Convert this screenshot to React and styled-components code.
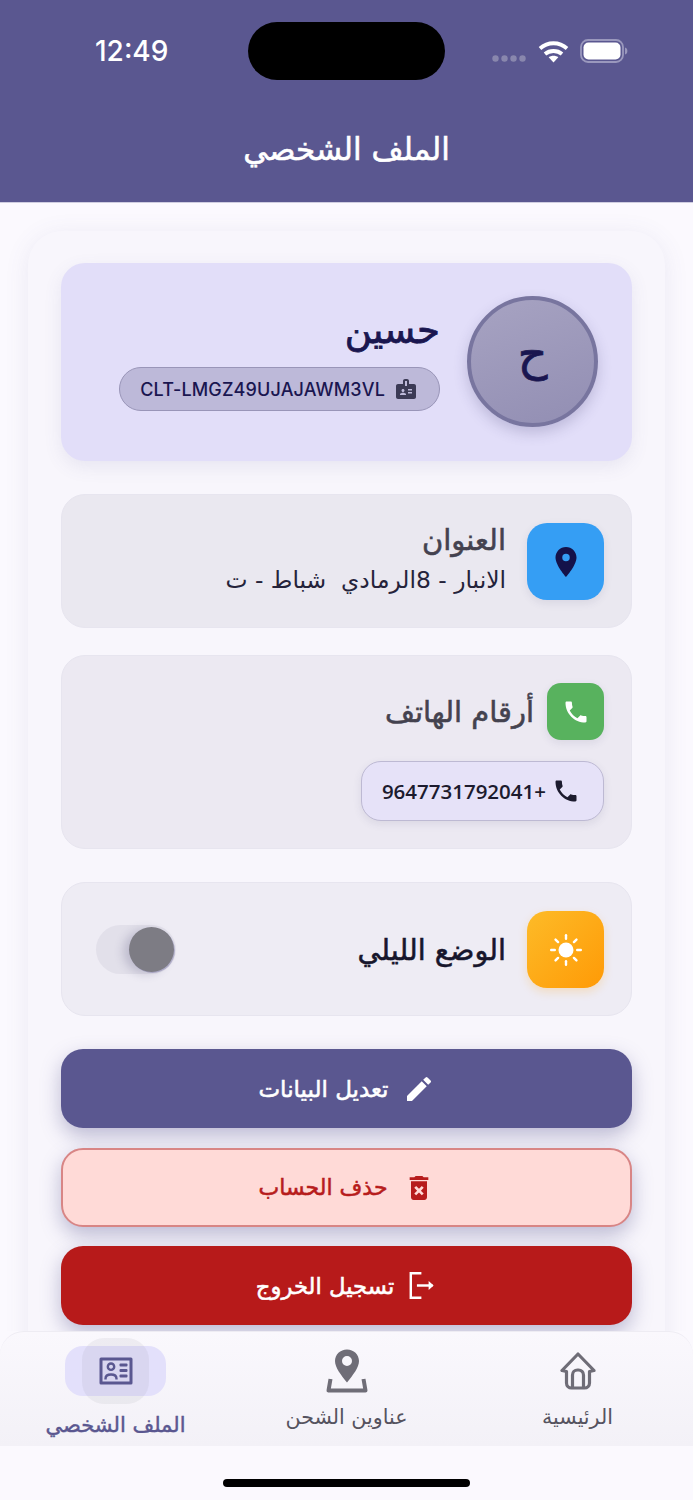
import React from 'react';
import styled, { createGlobalStyle, css } from 'styled-components';
import { MdBadge, MdDeleteForever, MdEdit, MdLocationOn, MdPhone } from 'react-icons/md';

const GlobalStyle = createGlobalStyle`
  html, body {
    margin: 0;
    padding: 0;
    background: #fbf9fe;
  }
  * {
    box-sizing: border-box;
  }
`;

// the arabic in the screenshot is a medium weight, regular + thin stroke comes closest
const mediumArabic = css`
  font-weight: 400;
  -webkit-text-stroke: 0.55px currentColor;
`;

const Page = styled.div`
  width: 693px;
  height: 1500px;
  display: flex;
  flex-direction: column;
  overflow: hidden;
  background: #fbf9fe;
  font-family: "DejaVu Sans", "Noto Sans", sans-serif;
`;

const Header = styled.header`
  height: 203px;
  flex: none;
  background: #5a5790;
  border-bottom: 1px solid #cfcde0;
  color: #fff;
  display: flex;
  flex-direction: column;
  align-items: center;
`;

const StatusBar = styled.div`
  width: 100%;
  height: 58px;
  margin-top: 22px;
  display: grid;
  grid-template-columns: 248px 197px 248px;
`;

const Time = styled.div`
  font-family: Inter, sans-serif;
  font-size: 28px;
  font-weight: 500;
  line-height: 58px;
  padding-left: 95px;
`;

const Island = styled.div`
  background: #000;
  border-radius: 29px;
`;

const StatusIcons = styled.div`
  display: flex;
  align-items: center;
  gap: 11px;
  padding: 0 0 0 47px;
`;

const Title = styled.h1`
  margin: 49px 0 0;
  font-size: 31px;
  line-height: 40px;
  ${mediumArabic}
`;

const Scroll = styled.main`
  flex: 1;
  min-height: 0;
  overflow: hidden;
  padding: 28px 28px 0;
`;

const Card = styled.section`
  height: 1200px;
  padding: 32px 33px;
  border-radius: 34px;
  background: #f8f6fc;
  box-shadow: 0 4px 24px rgba(90, 87, 144, 0.1);
  display: flex;
  flex-direction: column;
`;

const ProfileCard = styled.div`
  height: 198px;
  flex: none;
  padding: 33px 34px 0 0;
  border-radius: 24px;
  background: #e2def9;
  box-shadow: 0 6px 18px rgba(90, 87, 144, 0.1);
  display: flex;
  justify-content: flex-start;
  flex-direction: row-reverse;
  gap: 27px;
`;

const Avatar = styled.div`
  width: 131px;
  height: 131px;
  flex: none;
  border-radius: 50%;
  border: 4px solid #78759f;
  background: linear-gradient(160deg, #a7a3c2, #928eb3);
  box-shadow: 0 6px 14px rgba(60, 56, 110, 0.22);
  color: #1a1650;
  display: flex;
  align-items: center;
  justify-content: center;
  padding-bottom: 16px;
  font-size: 46px;
  -webkit-text-stroke: 0.8px currentColor;
`;

const ProfileInfo = styled.div`
  display: flex;
  flex-direction: column;
  align-items: flex-end;
  padding-top: 12px;
`;

const Name = styled.div`
  color: #1a1650;
  font-size: 37px;
  line-height: 46px;
  font-weight: 400;
  -webkit-text-stroke: 0.8px currentColor;
  direction: rtl;
`;

const CodePill = styled.div`
  height: 44px;
  margin-top: 13px;
  padding: 0 21px 0 20px;
  border-radius: 22px;
  border: 1px solid #9995b8;
  background: #bdb9d9;
  color: #1a1650;
  display: flex;
  align-items: center;
  gap: 9px;
  font-family: Inter, sans-serif;
  font-size: 18px;
  font-weight: 500;
  letter-spacing: 0.15px;
  svg {
    color: #3b3a55;
  }
`;

const Section = styled.div`
  height: ${(p) => p.$height}px;
  flex: none;
  margin-top: ${(p) => p.$gap}px;
  padding: ${(p) => p.$top || 28}px 27px 0 28px;
  border-radius: 24px;
  border: 1px solid #e7e5ef;
  background: ${(p) => p.$bg};
  direction: rtl;
`;

const Row = styled.div`
  display: flex;
  align-items: ${(p) => (p.$center ? 'center' : 'flex-start')};
  gap: ${(p) => p.$gap || 21}px;
`;

const IconTile = styled.div`
  width: ${(p) => p.$w}px;
  height: ${(p) => p.$h}px;
  flex: none;
  border-radius: ${(p) => p.$r}px;
  background: ${(p) => p.$bg};
  box-shadow: ${(p) => p.$shadow || '0 3px 8px rgba(60, 56, 110, 0.1)'};
  display: flex;
  align-items: center;
  justify-content: center;
`;

const SectionTitle = styled.div`
  color: #44424f;
  font-size: 29px;
  line-height: 34px;
  ${mediumArabic}
`;

const AddressText = styled.div`
  margin-top: 7px;
  color: #25233a;
  font-size: 23.4px;
  line-height: 32px;
  white-space: pre;
`;

const PhoneChip = styled.div`
  width: 243px;
  height: 60px;
  margin-top: 21px;
  padding: 0 23px 0 0;
  border-radius: 20px;
  border: 1px solid #bdb9d3;
  background: #e6e2f8;
  box-shadow: 0 3px 8px rgba(60, 56, 110, 0.1);
  color: #1c1b2e;
  display: flex;
  align-items: center;
  gap: 6px;
  font-family: "Open Sans", sans-serif;
  font-size: 20.5px;
  font-weight: 600;
  white-space: nowrap;
`;

const NightLabel = styled.div`
  flex: 1;
  color: #17162c;
  font-size: 28.7px;
  ${mediumArabic}
`;

const Toggle = styled.div`
  width: 80px;
  height: 49px;
  margin-left: 6px;
  flex: none;
  padding: 2px 2px;
  border-radius: 25px;
  background: #e2e0ea;
  display: flex;
  justify-content: flex-start;
`;

const Knob = styled.div`
  width: 45px;
  height: 45px;
  border-radius: 50%;
  background: #7d7c84;
  box-shadow: -6px 2px 10px rgba(70, 66, 110, 0.22), 1px 1px 0 #b4b1cc;
`;

const ActionButton = styled.button`
  width: 100%;
  height: ${(p) => p.$height}px;
  flex: none;
  margin-top: ${(p) => p.$gap}px;
  padding: 0;
  border-radius: 22px;
  border: ${(p) => (p.$outline ? '2px solid #d88585' : 'none')};
  background: ${(p) => p.$bg};
  color: ${(p) => p.$color};
  box-shadow: 0 8px 20px rgba(90, 87, 144, 0.38);
  direction: rtl;
  display: flex;
  align-items: center;
  justify-content: center;
  gap: ${(p) => p.$iconGap}px;
  font-family: inherit;
  font-size: ${(p) => p.$size}px;
  ${mediumArabic}
`;

const TabBar = styled.nav`
  height: 115px;
  flex: none;
  position: relative;
  border-radius: 24px 24px 0 0;
  border-top: 1px solid #eeecf3;
  background: linear-gradient(#faf8fd, #f3f1f7);
  display: grid;
  grid-template-columns: repeat(3, 1fr);
`;

const Tab = styled.div`
  display: flex;
  flex-direction: column;
  align-items: center;
  color: ${(p) => (p.$active ? '#5a5790' : '#55535f')};
  font-size: ${(p) => (p.$active ? 21 : 20.6)}px;
  -webkit-text-stroke: ${(p) => (p.$active ? '0.45px currentColor' : '0')};
  white-space: nowrap;
`;

const TabIconBox = styled.div`
  height: ${(p) => p.$height}px;
  margin-top: ${(p) => p.$top}px;
  display: flex;
  align-items: center;
  justify-content: center;
`;

const ActiveBlob = styled.div`
  width: 101px;
  height: 50px;
  margin-top: 14px;
  position: relative;
  border-radius: 18px;
  background: #e3e0fb;
  display: flex;
  align-items: center;
  justify-content: center;
  &::before {
    content: '';
    position: absolute;
    left: 17px;
    top: -8px;
    width: 67px;
    height: 66px;
    border-radius: 22px;
    background: rgba(120, 118, 130, 0.09);
  }
  svg {
    position: relative;
  }
`;

const TabLabel = styled.div`
  margin-top: ${(p) => p.$top}px;
  line-height: 26px;
  direction: rtl;
`;

const HomeArea = styled.div`
  height: 54px;
  flex: none;
  display: flex;
  justify-content: center;
  padding-top: 33px;
`;

const HomeBar = styled.div`
  width: 247px;
  height: 8px;
  border-radius: 4px;
  background: #000;
`;

function WifiIcon() {
  return (
    <svg width="31" height="24" viewBox="0 0 31 24" fill="none" stroke="#fff" strokeWidth="3.8">
      <path d="M2 9.500C9.700 2.500 21.300 2.500 29 9.500" />
      <path d="M7 15C11.700 11 19.300 11 24 15" />
      <path d="M15.500 23.500l-4.800-5.200c2.700-2 6.900-2 9.600 0z" fill="#fff" stroke="none" />
    </svg>
  );
}

function BatteryIcon() {
  return (
    <svg width="48" height="24" viewBox="0 0 48 24">
      <rect x="1" y="1" width="42" height="22" rx="7" fill="none" stroke="#9a98bd" strokeWidth="1.8" />
      <rect x="3.500" y="3.500" width="37" height="17" rx="5" fill="#fff" />
      <path d="M45 8.500c1.600.4 2.400 1.800 2.400 3.500s-.8 3.100-2.400 3.500z" fill="#9a98bd" />
    </svg>
  );
}

function SignalDots() {
  return (
    <svg width="35" height="9" viewBox="0 0 35 9" style={{ marginTop: 14 }}>
      {[3.5, 12.5, 21.5, 30.5].map((x) => (
        <circle key={x} cx={x} cy="4.5" r="3.2" fill="#8987ad" />
      ))}
    </svg>
  );
}

function SunIcon() {
  const rays = [0, 45, 90, 135, 180, 225, 270, 315];
  return (
    <svg width="36" height="36" viewBox="0 0 36 36">
      <circle cx="18" cy="18" r="7.500" fill="#fff" />
      {rays.map((a) => (
        <rect key={a} x="16.800" y="2" width="2.400" height="6" rx="1.200" fill="#fff" transform={`rotate(${a} 18 18)`} />
      ))}
    </svg>
  );
}

function LogoutIcon() {
  return (
    <svg width="29" height="29" viewBox="0 0 26 26" fill="none" stroke="#fff" strokeWidth="2.200">
      <path d="M12 2H2.500v22H12" />
      <path d="M8 13h14" />
      <path d="M18.500 9l4.500 4-4.500 4z" fill="#fff" stroke="none" />
    </svg>
  );
}

function ProfileIcon() {
  return (
    <svg width="34" height="28" viewBox="0 0 34 28" fill="#5a5790">
      <path
        fillRule="evenodd"
        d="M2 .5h30A1.500 1.500 0 0 1 33.500 2v24a1.500 1.500 0 0 1-1.500 1.500H2A1.500 1.500 0 0 1 .5 26V2A1.500 1.500 0 0 1 2 .5zM3.500 3.500v21h27v-21z"
      />
      <path fill="none" stroke="#5a5790" strokeWidth="2.400" d="M12 6.500a3.200 3.200 0 1 1 0 6.400a3.200 3.200 0 0 1 0-6.400zM6.500 22.500v-.8c0-2.800 2.400-4.200 5.500-4.200s5.500 1.400 5.500 4.200v.8" />
      <rect x="20.500" y="6.500" width="8" height="3" rx="1" />
      <rect x="20.500" y="12" width="8" height="3" rx="1" />
      <rect x="20.500" y="17.500" width="8" height="3" rx="1" />
    </svg>
  );
}

function ShippingIcon() {
  return (
    <svg width="42" height="44" viewBox="0 0 42 44">
      <path
        fill="#6f6d77"
        fillRule="evenodd"
        d="M21 .5c6.800 0 12 5 12 11.500 0 6.500-6 14-12 21.500C15 26 9 18.500 9 12 9 5.500 14.200.5 21 .5zm0 6.500a5 5 0 1 0 0 10a5 5 0 0 0 0-10z"
      />
      <path fill="none" stroke="#6f6d77" strokeWidth="4" strokeLinejoin="round" d="M4.500 30L2.500 41.500h37L37.500 30" />
    </svg>
  );
}

function HomeIcon() {
  return (
    <svg width="36" height="38" viewBox="0 0 36 38" fill="none" stroke="#6f6d77" strokeWidth="3.200" strokeLinejoin="round">
      <path d="M18 2L2 18.500l4.500 1V31a5 5 0 0 0 5 5h13a5 5 0 0 0 5-5V19.500l4.500-1z" />
      <path d="M12.500 36V23a5 5 0 0 1 5-5h1a5 5 0 0 1 5 5v13" />
    </svg>
  );
}

export default function App() {
  return (
    <Page>
      <GlobalStyle />
      <Header>
        <StatusBar>
          <Time>12:49</Time>
          <Island />
          <StatusIcons>
            <SignalDots />
            <WifiIcon />
            <BatteryIcon />
          </StatusIcons>
        </StatusBar>
        <Title>الملف الشخصي</Title>
      </Header>

      <Scroll>
        <Card>
          <ProfileCard>
            <Avatar>ح</Avatar>
            <ProfileInfo>
              <Name>حسين</Name>
              <CodePill>
                CLT-LMGZ49UJAJAWM3VL
                <MdBadge size={24} />
              </CodePill>
            </ProfileInfo>
          </ProfileCard>

          <Section $height={134} $gap={33} $bg="#eae8f0">
            <Row>
              <IconTile $w={77} $h={77} $r={20} $bg="#359ef4">
                <MdLocationOn size={36} color="#14124a" />
              </IconTile>
              <div>
                <SectionTitle>العنوان</SectionTitle>
                <AddressText>الانبار - 8الرمادي  شباط - ت</AddressText>
              </div>
            </Row>
          </Section>

          <Section $height={194} $gap={27} $top={27} $bg="#ece9f2">
            <Row $center $gap={13}>
              <IconTile $w={57} $h={57} $r={14} $bg="#58b25e">
                <MdPhone size={28} color="#fff" />
              </IconTile>
              <SectionTitle>أرقام الهاتف</SectionTitle>
            </Row>
            <PhoneChip>
              <MdPhone size={28} color="#1c1b2e" />
              <span>+9647731792041</span>
            </PhoneChip>
          </Section>

          <Section $height={134} $gap={33} $bg="#eeecf4">
            <Row $center>
              <IconTile
                $w={77}
                $h={77}
                $r={20}
                $bg="linear-gradient(135deg, #fdbb28, #ff9a06)"
                $shadow="0 4px 10px rgba(255, 166, 20, 0.22)"
              >
                <SunIcon />
              </IconTile>
              <NightLabel>الوضع الليلي</NightLabel>
              <Toggle>
                <Knob />
              </Toggle>
            </Row>
          </Section>

          <ActionButton $height={79} $gap={33} $iconGap={14} $size={23} $bg="#5a5790" $color="#fff">
            <MdEdit size={32} />
            تعديل البيانات
          </ActionButton>
          <ActionButton $height={79} $gap={20} $iconGap={15} $size={22} $bg="#ffdad7" $color="#b71c1c" $outline>
            <MdDeleteForever size={32} />
            حذف الحساب
          </ActionButton>
          <ActionButton $height={79} $gap={19} $iconGap={14} $size={22.7} $bg="#b71a1a" $color="#fff">
            <LogoutIcon />
            تسجيل الخروج
          </ActionButton>
        </Card>
      </Scroll>

      <TabBar>
        <Tab $active>
          <ActiveBlob>
            <ProfileIcon />
          </ActiveBlob>
          <TabLabel $top={16}>الملف الشخصي</TabLabel>
        </Tab>
        <Tab>
          <TabIconBox $height={46} $top={16}>
            <ShippingIcon />
          </TabIconBox>
          <TabLabel $top={10}>عناوين الشحن</TabLabel>
        </Tab>
        <Tab>
          <TabIconBox $height={38} $top={20}>
            <HomeIcon />
          </TabIconBox>
          <TabLabel $top={14}>الرئيسية</TabLabel>
        </Tab>
      </TabBar>
      <HomeArea>
        <HomeBar />
      </HomeArea>
    </Page>
  );
}
